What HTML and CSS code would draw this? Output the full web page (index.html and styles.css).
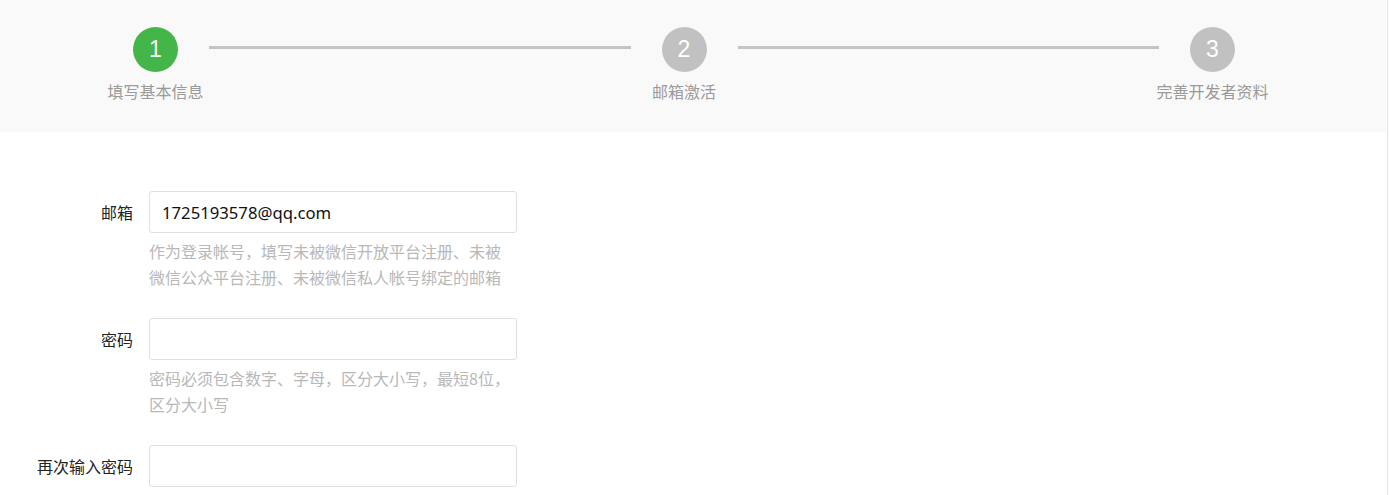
FILE: index.html
```html
<!DOCTYPE html>
<html lang="zh-CN">
<head>
<meta charset="utf-8">
<title>注册</title>
<link rel="stylesheet" href="styles.css">
</head>
<body>
<div class="page">
  <div class="steps-band">
    <div class="steps">
      <div class="step">
        <div class="step-circle active">1</div>
        <div class="step-label">填写基本信息</div>
      </div>
      <div class="step-line"></div>
      <div class="step">
        <div class="step-circle">2</div>
        <div class="step-label">邮箱激活</div>
      </div>
      <div class="step-line"></div>
      <div class="step">
        <div class="step-circle">3</div>
        <div class="step-label">完善开发者资料</div>
      </div>
    </div>
  </div>

  <form class="form">
    <div class="form-row">
      <label class="form-label">邮箱</label>
      <div class="form-field">
        <input class="form-input" type="text" value="1725193578@qq.com">
        <p class="form-hint">作为登录帐号，填写未被微信开放平台注册、未被微信公众平台注册、未被微信私人帐号绑定的邮箱</p>
      </div>
    </div>
    <div class="form-row">
      <label class="form-label">密码</label>
      <div class="form-field">
        <input class="form-input" type="password" value="">
        <p class="form-hint">密码必须包含数字、字母，区分大小写，最短8位，区分大小写</p>
      </div>
    </div>
    <div class="form-row">
      <label class="form-label">再次输入密码</label>
      <div class="form-field">
        <input class="form-input" type="password" value="">
      </div>
    </div>
  </form>
</div>
</body>
</html>
```

FILE: styles.css
```css
html, body {
  margin: 0;
  padding: 0;
  background: #ffffff;
}

body {
  font-family: "Noto Sans", "Noto Sans CJK SC", sans-serif;
  color: #222;
  overflow: hidden;
}

.page {
  width: 1387px;
  height: 495px;
  border-right: 1px solid #e4e4e4;
  overflow: hidden;
}

.steps-band {
  width: 1386px;
  height: 132px;
  background: #f9f9f9;
  box-sizing: border-box;
  padding: 27px 151px 0 133px;
}

.steps {
  display: flex;
  align-items: flex-start;
}

.step {
  width: 45px;
  flex: none;
  display: flex;
  flex-direction: column;
  align-items: center;
}

.step-circle {
  width: 45px;
  height: 45px;
  border-radius: 50%;
  background: #c1c1c1;
  color: #fff;
  font-family: "Liberation Sans", Arial, sans-serif;
  font-size: 23px;
  line-height: 45px;
  text-align: center;
}

.step-circle.active {
  background: #44b549;
}

.step-label {
  margin-top: 9px;
  white-space: nowrap;
  font-family: "Noto Sans CJK SC", sans-serif;
  font-size: 16px;
  line-height: 20px;
  color: #9a9a9a;
}

.step-line {
  flex: 1;
  height: 3px;
  margin: 19px 31px 0;
  background: #c4c4c4;
}

.form {
  margin: 0;
  padding-top: 59px;
}

.form-row {
  display: flex;
  align-items: flex-start;
  gap: 16px;
  margin-bottom: 28px;
}

.form-label {
  width: 133px;
  flex: none;
  text-align: right;
  font-family: "Noto Sans CJK SC", sans-serif;
  font-size: 16px;
  line-height: 42px;
  color: #222;
}

.form-field {
  width: 368px;
}

.form-input {
  display: block;
  width: 368px;
  height: 42px;
  box-sizing: border-box;
  border: 1px solid #e0e0e0;
  border-radius: 3px;
  padding: 0 12px;
  font-family: "Noto Sans", "Noto Sans CJK SC", sans-serif;
  font-size: 16.7px;
  color: #111;
  background: #fff;
  outline: none;
}

.form-hint {
  margin: 5px 0 0;
  max-width: 364px;
  font-family: "Noto Sans CJK SC", sans-serif;
  font-size: 16px;
  line-height: 26px;
  color: #b8b8b8;
}
```
